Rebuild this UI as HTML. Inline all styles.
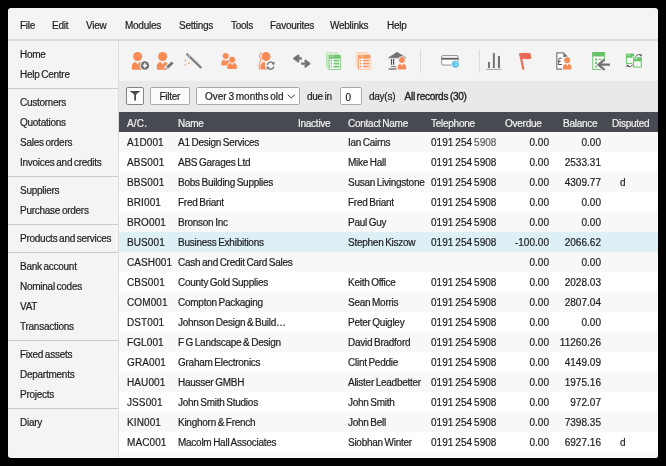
<!DOCTYPE html>
<html><head><meta charset="utf-8">
<style>
html,body{margin:0;padding:0;background:#000;width:666px;height:466px;overflow:hidden}
body{font-family:"Liberation Sans",sans-serif;font-size:10px;color:#1e1e1e;position:relative;-webkit-text-stroke:0.2px}
.win{position:absolute;left:8px;top:8px;width:650px;height:450px;background:#f4f4f4;border-radius:3px;overflow:hidden}
.a{position:absolute;white-space:nowrap;line-height:20px;letter-spacing:-0.26px;word-spacing:-0.8px}
.menu{position:absolute;left:0;top:0;width:650px;height:31px;border-bottom:2px solid #dcdcdc}
.side{position:absolute;left:0;top:33px;width:110px;height:417px;border-right:1px solid #dedede}
.sep{position:absolute;left:0;width:110px;height:1px;background:#cbcbcb}
.tb{position:absolute;left:111px;top:33px;width:539px;height:40px;background:#f4f4f4}
.fb{position:absolute;left:111px;top:73px;width:539px;height:31px;background:#e9e9e9}
.hd{position:absolute;left:111px;top:104px;width:539px;height:20px;background:#474a50;color:#f2f2f2}
.rows{position:absolute;left:111px;top:124px;width:539px;height:326px}
.r{position:absolute;left:0;width:539px;height:20px;background:#fff}
.r.o{background:#f8f8f8}
.r.s{background:#dcf0f6}
.btn{position:absolute;background:#fcfcfc;border:1px solid #a9a9a9;border-radius:2px;box-sizing:border-box}
.num{letter-spacing:0.02px}
.rt{text-align:right}
.menu .a{margin-top:2px}
.side .a{margin-top:1px}
.rows .a{margin-top:1px}
.hd .a{margin-top:1.5px}
.fb .a{margin-top:1px}
</style></head><body>
<div class="win" style="will-change:transform">
  <div class="menu">
    <span class="a" style="left:12px;top:6px">File</span>
    <span class="a" style="left:44px;top:6px">Edit</span>
    <span class="a" style="left:78px;top:6px">View</span>
    <span class="a" style="left:117px;top:6px">Modules</span>
    <span class="a" style="left:171px;top:6px">Settings</span>
    <span class="a" style="left:223px;top:6px">Tools</span>
    <span class="a" style="left:262px;top:6px">Favourites</span>
    <span class="a" style="left:322px;top:6px">Weblinks</span>
    <span class="a" style="left:379px;top:6px">Help</span>
  </div>
  <div class="side">
    <span class="a" style="left:12px;top:3px">Home</span>
    <span class="a" style="left:12px;top:23px">Help Centre</span>
    <div class="sep" style="top:47px"></div>
    <span class="a" style="left:12px;top:51px">Customers</span>
    <span class="a" style="left:12px;top:71px">Quotations</span>
    <span class="a" style="left:12px;top:91px">Sales orders</span>
    <span class="a" style="left:12px;top:111px">Invoices and credits</span>
    <div class="sep" style="top:135px"></div>
    <span class="a" style="left:12px;top:139px">Suppliers</span>
    <span class="a" style="left:12px;top:159px">Purchase orders</span>
    <div class="sep" style="top:183px"></div>
    <span class="a" style="left:12px;top:187px">Products and services</span>
    <div class="sep" style="top:211px"></div>
    <span class="a" style="left:12px;top:215px">Bank account</span>
    <span class="a" style="left:12px;top:235px">Nominal codes</span>
    <span class="a" style="left:12px;top:255px">VAT</span>
    <span class="a" style="left:12px;top:275px">Transactions</span>
    <div class="sep" style="top:299px"></div>
    <span class="a" style="left:12px;top:303px">Fixed assets</span>
    <span class="a" style="left:12px;top:323px">Departments</span>
    <span class="a" style="left:12px;top:343px">Projects</span>
    <div class="sep" style="top:367px"></div>
    <span class="a" style="left:12px;top:371px">Diary</span>
  </div>
  <div class="tb"></div>
  <div class="fb">
    <div class="btn" style="left:7px;top:6px;width:18px;height:18px;border-color:#858585;border-width:1.3px"></div>
    <div class="btn" style="left:31px;top:6px;width:40px;height:18px"></div>
    <span class="a" style="left:40.5px;top:5px">Filter</span>
    <div class="btn" style="left:77px;top:6px;width:104px;height:18px"></div>
    <span class="a" style="left:86px;top:5px;letter-spacing:-0.05px">Over 3 months old</span>
    <span class="a" style="left:188px;top:5px">due in</span>
    <div class="btn" style="left:221px;top:6px;width:22px;height:18px;background:#fff"></div>
    <span class="a" style="left:226.5px;top:6px">0</span>
    <span class="a" style="left:250px;top:5px">day(s)</span>
    <span class="a" style="left:285.5px;top:5px;-webkit-text-stroke:0.35px #222;letter-spacing:-0.25px">All records (30)</span>
  </div>
  <div class="hd">
    <span class="a" style="left:8px;top:0;letter-spacing:0.2px">A/C.</span>
    <span class="a" style="left:59px;top:0">Name</span>
    <span class="a" style="left:179px;top:0">Inactive</span>
    <span class="a" style="left:229px;top:0">Contact Name</span>
    <span class="a" style="left:312px;top:0">Telephone</span>
    <span class="a" style="left:386px;top:0">Overdue</span>
    <span class="a" style="left:444px;top:0">Balance</span>
    <span class="a" style="left:493px;top:0">Disputed</span>
  </div>
  <div class="rows" id="rows"><div class="r o" style="top:0px"><span class="a" style="left:8px;top:0;letter-spacing:0.1px">A1D001</span><span class="a" style="left:59px;top:0">A1 Design Services</span><span class="a" style="left:229px;top:0">Ian Cairns</span><span class="a num" style="left:312px;top:0">0191 254 <span style="color:#5c5c5c">5908</span></span><span class="a num rt" style="right:109px;top:0">0.00</span><span class="a num rt" style="right:57px;top:0">0.00</span></div><div class="r" style="top:20px"><span class="a" style="left:8px;top:0;letter-spacing:0.1px">ABS001</span><span class="a" style="left:59px;top:0">ABS Garages Ltd</span><span class="a" style="left:229px;top:0">Mike Hall</span><span class="a num" style="left:312px;top:0">0191 254 5908</span><span class="a num rt" style="right:109px;top:0">0.00</span><span class="a num rt" style="right:57px;top:0">2533.31</span></div><div class="r o" style="top:40px"><span class="a" style="left:8px;top:0;letter-spacing:0.1px">BBS001</span><span class="a" style="left:59px;top:0">Bobs Building Supplies</span><span class="a" style="left:229px;top:0">Susan Livingstone</span><span class="a num" style="left:312px;top:0">0191 254 5908</span><span class="a num rt" style="right:109px;top:0">0.00</span><span class="a num rt" style="right:57px;top:0">4309.77</span><span class="a" style="left:501px;top:0">d</span></div><div class="r" style="top:60px"><span class="a" style="left:8px;top:0;letter-spacing:0.1px">BRI001</span><span class="a" style="left:59px;top:0">Fred Briant</span><span class="a" style="left:229px;top:0">Fred Briant</span><span class="a num" style="left:312px;top:0">0191 254 5908</span><span class="a num rt" style="right:109px;top:0">0.00</span><span class="a num rt" style="right:57px;top:0">0.00</span></div><div class="r o" style="top:80px"><span class="a" style="left:8px;top:0;letter-spacing:0.1px">BRO001</span><span class="a" style="left:59px;top:0">Bronson Inc</span><span class="a" style="left:229px;top:0">Paul Guy</span><span class="a num" style="left:312px;top:0">0191 254 5908</span><span class="a num rt" style="right:109px;top:0">0.00</span><span class="a num rt" style="right:57px;top:0">0.00</span></div><div class="r s" style="top:100px"><span class="a" style="left:8px;top:0;letter-spacing:0.1px">BUS001</span><span class="a" style="left:59px;top:0">Business Exhibitions</span><span class="a" style="left:229px;top:0">Stephen Kiszow</span><span class="a num" style="left:312px;top:0">0191 254 5908</span><span class="a num rt" style="right:109px;top:0">-100.00</span><span class="a num rt" style="right:57px;top:0">2066.62</span></div><div class="r o" style="top:120px"><span class="a" style="left:8px;top:0;letter-spacing:0.1px">CASH001</span><span class="a" style="left:59px;top:0">Cash and Credit Card Sales</span><span class="a num rt" style="right:109px;top:0">0.00</span><span class="a num rt" style="right:57px;top:0">0.00</span></div><div class="r" style="top:140px"><span class="a" style="left:8px;top:0;letter-spacing:0.1px">CBS001</span><span class="a" style="left:59px;top:0">County Gold Supplies</span><span class="a" style="left:229px;top:0">Keith Office</span><span class="a num" style="left:312px;top:0">0191 254 5908</span><span class="a num rt" style="right:109px;top:0">0.00</span><span class="a num rt" style="right:57px;top:0">2028.03</span></div><div class="r o" style="top:160px"><span class="a" style="left:8px;top:0;letter-spacing:0.1px">COM001</span><span class="a" style="left:59px;top:0">Compton Packaging</span><span class="a" style="left:229px;top:0">Sean Morris</span><span class="a num" style="left:312px;top:0">0191 254 5908</span><span class="a num rt" style="right:109px;top:0">0.00</span><span class="a num rt" style="right:57px;top:0">2807.04</span></div><div class="r" style="top:180px"><span class="a" style="left:8px;top:0;letter-spacing:0.1px">DST001</span><span class="a" style="left:59px;top:0">Johnson Design &amp; Build…</span><span class="a" style="left:229px;top:0">Peter Quigley</span><span class="a num" style="left:312px;top:0">0191 254 5908</span><span class="a num rt" style="right:109px;top:0">0.00</span><span class="a num rt" style="right:57px;top:0">0.00</span></div><div class="r o" style="top:200px"><span class="a" style="left:8px;top:0;letter-spacing:0.1px">FGL001</span><span class="a" style="left:59px;top:0">F G Landscape &amp; Design</span><span class="a" style="left:229px;top:0">David Bradford</span><span class="a num" style="left:312px;top:0">0191 254 5908</span><span class="a num rt" style="right:109px;top:0">0.00</span><span class="a num rt" style="right:57px;top:0">11260.26</span></div><div class="r" style="top:220px"><span class="a" style="left:8px;top:0;letter-spacing:0.1px">GRA001</span><span class="a" style="left:59px;top:0">Graham Electronics</span><span class="a" style="left:229px;top:0">Clint Peddie</span><span class="a num" style="left:312px;top:0">0191 254 5908</span><span class="a num rt" style="right:109px;top:0">0.00</span><span class="a num rt" style="right:57px;top:0">4149.09</span></div><div class="r o" style="top:240px"><span class="a" style="left:8px;top:0;letter-spacing:0.1px">HAU001</span><span class="a" style="left:59px;top:0">Hausser GMBH</span><span class="a" style="left:229px;top:0">Alister Leadbetter</span><span class="a num" style="left:312px;top:0">0191 254 5908</span><span class="a num rt" style="right:109px;top:0">0.00</span><span class="a num rt" style="right:57px;top:0">1975.16</span></div><div class="r" style="top:260px"><span class="a" style="left:8px;top:0;letter-spacing:0.1px">JSS001</span><span class="a" style="left:59px;top:0">John Smith Studios</span><span class="a" style="left:229px;top:0">John Smith</span><span class="a num" style="left:312px;top:0">0191 254 5908</span><span class="a num rt" style="right:109px;top:0">0.00</span><span class="a num rt" style="right:57px;top:0">972.07</span></div><div class="r o" style="top:280px"><span class="a" style="left:8px;top:0;letter-spacing:0.1px">KIN001</span><span class="a" style="left:59px;top:0">Kinghorn &amp; French</span><span class="a" style="left:229px;top:0">John Bell</span><span class="a num" style="left:312px;top:0">0191 254 5908</span><span class="a num rt" style="right:109px;top:0">0.00</span><span class="a num rt" style="right:57px;top:0">7398.35</span></div><div class="r" style="top:300px"><span class="a" style="left:8px;top:0;letter-spacing:0.1px">MAC001</span><span class="a" style="left:59px;top:0">Macolm Hall Associates</span><span class="a" style="left:229px;top:0">Siobhan Winter</span><span class="a num" style="left:312px;top:0">0191 254 5908</span><span class="a num rt" style="right:109px;top:0">0.00</span><span class="a num rt" style="right:57px;top:0">6927.16</span><span class="a" style="left:501px;top:0">d</span></div><div class="r o" style="top:320px"></div></div>
</div>
<svg id="icons" width="666" height="466" style="position:absolute;left:0;top:0"><circle cx="137.6" cy="56.5" r="4.5" fill="#f78b55"/><path d="M131.80,68.80 L131.80,66.84 C131.80,63.93 133.47,62.00 135.98,62.00 L136.09,62.30 L137.60,64.81 L139.11,62.30 L139.22,62.00 C141.73,62.00 143.40,63.93 143.40,66.84 L143.40,68.80 Q143.40,69.80 142.40,69.80 L132.80,69.80 Q131.80,69.80 131.80,68.80 Z" fill="#f78b55"/><circle cx="144.9" cy="65.5" r="5.2" fill="#f4f4f4"/><circle cx="144.9" cy="65.5" r="4.3" fill="#727272"/><path d="M144.9,63.3 V67.7 M142.7,65.5 H147.1" stroke="#fff" stroke-width="1.5"/><circle cx="162.6" cy="56.5" r="4.5" fill="#f78b55"/><path d="M156.80,68.80 L156.80,66.84 C156.80,63.93 158.47,62.00 160.98,62.00 L161.09,62.30 L162.60,64.81 L164.11,62.30 L164.22,62.00 C166.73,62.00 168.40,63.93 168.40,66.84 L168.40,68.80 Q168.40,69.80 167.40,69.80 L157.80,69.80 Q156.80,69.80 156.80,68.80 Z" fill="#f78b55"/><path d="M165.6,69.2 L172.6,62.6" stroke="#f4f4f4" stroke-width="5"/><path d="M167.3,67.6 L172.6,62.6" stroke="#727272" stroke-width="2.8"/><path d="M165.2,69.6 L166.0,67.4 L167.6,68.9 Z" fill="#727272"/><path d="M187.2,54.3 L200.7,67.4" stroke="#808080" stroke-width="2.3" stroke-linecap="round"/><path d="M187.6,54.7 L190.0,57.0" stroke="#d0d0d0" stroke-width="0.9"/><circle cx="185.4" cy="60.4" r="0.9" fill="#f2ac70"/><circle cx="189" cy="63.2" r="0.9" fill="#f2ac70"/><circle cx="185.4" cy="64.6" r="0.9" fill="#f2ac70"/><circle cx="225.7" cy="55.9" r="3.0" fill="#f78b55"/><path d="M221.30,64.60 L221.30,63.36 C221.30,61.16 222.57,59.70 224.47,59.70 L224.56,60.00 L225.70,61.82 L226.84,60.00 L226.93,59.70 C228.83,59.70 230.10,61.16 230.10,63.36 L230.10,64.60 Q230.10,65.60 229.10,65.60 L222.30,65.60 Q221.30,65.60 221.30,64.60 Z" fill="#f78b55"/><circle cx="232.1" cy="59.7" r="3.8" fill="#f4f4f4"/><path d="M226.50,68.90 L226.50,66.97 C226.50,64.11 228.11,62.20 230.53,62.20 L232.10,62.50 L232.10,62.20 L232.10,62.50 L233.67,62.20 C236.09,62.20 237.70,64.11 237.70,66.97 L237.70,68.90 Q237.70,69.90 236.70,69.90 L227.50,69.90 Q226.50,69.90 226.50,68.90 Z" fill="#f4f4f4"/><circle cx="232.1" cy="59.7" r="3.0" fill="#f78b55"/><path d="M227.30,68.10 L227.30,66.78 C227.30,64.51 228.68,63.00 230.76,63.00 L230.85,63.30 L232.10,65.20 L233.35,63.30 L233.44,63.00 C235.52,63.00 236.90,64.51 236.90,66.78 L236.90,68.10 Q236.90,69.10 235.90,69.10 L228.30,69.10 Q227.30,69.10 227.30,68.10 Z" fill="#f78b55"/><path d="M261.4,52.2 Q258.0,55.8 261.0,59.5 Q257.9,63.5 259.4,69.5" stroke="#f78b55" stroke-width="1" fill="none"/><circle cx="266.0" cy="56.6" r="4.5" fill="#f78b55"/><path d="M260.40,68.60 L260.40,66.71 C260.40,63.88 262.01,62.00 264.43,62.00 L264.54,62.30 L266.00,64.74 L267.46,62.30 L267.57,62.00 C269.99,62.00 271.60,63.88 271.60,66.71 L271.60,68.60 Q271.60,69.60 270.60,69.60 L261.40,69.60 Q260.40,69.60 260.40,68.60 Z" fill="#f78b55"/><circle cx="270.6" cy="65.6" r="5.6" fill="#f4f4f4"/><path d="M267.4,65.0 A3.3,3.3 0 0 1 273.4,63.4" stroke="#727272" stroke-width="1.3" fill="none"/><path d="M274.6,61.6 L274.3,64.9 L271.5,63.9 Z" fill="#727272"/><path d="M273.8,66.2 A3.3,3.3 0 0 1 267.8,67.8" stroke="#727272" stroke-width="1.3" fill="none"/><path d="M266.6,69.6 L266.9,66.3 L269.7,67.3 Z" fill="#727272"/><path d="M299.2,55.2 L294.4,58.5 L299.2,61.9 M294.6,58.5 H301.8" stroke="#727272" stroke-width="2.3" fill="none" stroke-linejoin="round"/><path d="M304.6,60.3 L309.3,63.6 L304.6,67.0 M301.1,63.6 H309.0" stroke="#727272" stroke-width="2.3" fill="none" stroke-linejoin="round"/><rect x="325.9" y="52.1" width="12.7" height="15.6" fill="#a3daa3" stroke="#fff" stroke-width="0.5"/><rect x="327.09999999999997" y="53.4" width="12.7" height="16.0" fill="#a3daa3" stroke="#fff" stroke-width="0.5"/><rect x="328.2" y="54.7" width="12.8" height="15.4" fill="#6ec66e" stroke="#fff" stroke-width="0.5"/><rect x="329.09999999999997" y="55.5" width="5.760000000000001" height="1.2" fill="#a3daa3"/><rect x="329.59999999999997" y="58.7" width="10.4" height="10.4" fill="#fff"/><rect x="330.59999999999997" y="59.7" width="1.5" height="1.8" fill="#6ec66e"/><rect x="333.59999999999997" y="59.7" width="5.6000000000000005" height="1.8" fill="#6ec66e"/><rect x="330.59999999999997" y="62.7" width="1.5" height="1.8" fill="#6ec66e"/><rect x="333.59999999999997" y="62.7" width="5.6000000000000005" height="1.8" fill="#6ec66e"/><rect x="330.59999999999997" y="65.7" width="1.5" height="1.8" fill="#6ec66e"/><rect x="333.59999999999997" y="65.7" width="5.6000000000000005" height="1.8" fill="#6ec66e"/><rect x="355.2" y="52.0" width="13.2" height="15.4" fill="#fbc1a1" stroke="#fff" stroke-width="0.5"/><rect x="356.4" y="53.3" width="13.2" height="15.8" fill="#fbc1a1" stroke="#fff" stroke-width="0.5"/><rect x="357.5" y="54.6" width="13.3" height="15.200000000000001" fill="#f7955f" stroke="#fff" stroke-width="0.5"/><rect x="358.4" y="55.4" width="5.985" height="1.2" fill="#fbc1a1"/><rect x="358.9" y="58.6" width="10.9" height="10.200000000000001" fill="#fff"/><rect x="359.9" y="59.6" width="1.5" height="1.8" fill="#f7955f"/><rect x="362.9" y="59.6" width="6.1000000000000005" height="1.8" fill="#f7955f"/><rect x="359.9" y="62.6" width="1.5" height="1.8" fill="#f7955f"/><rect x="362.9" y="62.6" width="6.1000000000000005" height="1.8" fill="#f7955f"/><rect x="359.9" y="65.6" width="1.5" height="1.8" fill="#f7955f"/><rect x="362.9" y="65.6" width="6.1000000000000005" height="1.8" fill="#f7955f"/><path d="M388.6,57.8 L397.1,52.3 L405.9,57.8 Z" fill="#727272" stroke="#727272" stroke-width="0.8" stroke-linejoin="round"/><rect x="390.9" y="59" width="1.2" height="5.8" fill="#555"/><rect x="393" y="59" width="1.2" height="5.8" fill="#555"/><rect x="390.9" y="66" width="5.2" height="1.2" fill="#888"/><rect x="388.6" y="68.3" width="8" height="1.4" fill="#727272"/><circle cx="401.9" cy="60.0" r="3.7" fill="#f4f4f4"/><path d="M396.80,69.40 L396.80,67.66 C396.80,64.99 398.27,63.20 400.47,63.20 L401.90,63.50 L401.90,63.20 L401.90,63.50 L403.33,63.20 C405.53,63.20 407.00,64.99 407.00,67.66 L407.00,69.40 Q407.00,70.40 406.00,70.40 L397.80,70.40 Q396.80,70.40 396.80,69.40 Z" fill="#f4f4f4"/><circle cx="401.9" cy="60.0" r="2.9" fill="#f78b55"/><path d="M397.60,68.60 L397.60,67.47 C397.60,65.39 398.84,64.00 400.70,64.00 L400.78,64.30 L401.90,66.02 L403.02,64.30 L403.10,64.00 C404.96,64.00 406.20,65.39 406.20,67.47 L406.20,68.60 Q406.20,69.60 405.20,69.60 L398.60,69.60 Q397.60,69.60 397.60,68.60 Z" fill="#f78b55"/><rect x="420" y="50" width="1" height="22.6" fill="#dadada"/><rect x="479" y="50" width="1" height="22.6" fill="#dadada"/><rect x="441.7" y="55.6" width="16.4" height="9.4" rx="1" fill="#fff" stroke="#858585" stroke-width="0.9"/><rect x="441.5" y="57.8" width="16.8" height="1.8" fill="#606060"/><circle cx="455.4" cy="64.2" r="4.3" fill="#f4f4f4"/><circle cx="455.4" cy="64.2" r="3.5" fill="#5cc0e8"/><path d="M453.5,62.6 h0.9 M453.5,65.6 h0.9 M455.3,62.6 h2 M455.3,64.1 h2 M455.3,65.6 h2" stroke="#cdeefa" stroke-width="0.7"/><rect x="488" y="62" width="1.9" height="6" fill="#727272"/><rect x="492.9" y="53.1" width="1.9" height="14.9" fill="#727272"/><rect x="497.9" y="55.9" width="2.1" height="12.1" fill="#727272"/><rect x="486.1" y="68.9" width="15.3" height="0.9" fill="#9a9a9a"/><path d="M519,53.2 Q524.5,52.2 530.6,53.2 L531.2,58.6 Q528.5,59.6 525,59 Q522.5,58.6 520.9,59.1 Z" fill="#ec6a52"/><path d="M520.2,54 L523.4,69.6" stroke="#ec6a52" stroke-width="2.1"/><circle cx="522.5" cy="56.3" r="0.45" fill="#7a6a8a"/><circle cx="524.6" cy="55.5" r="0.45" fill="#7a6a8a"/><circle cx="527.6" cy="56.2" r="0.45" fill="#7a6a8a"/><circle cx="529.5" cy="57.9" r="0.45" fill="#7a6a8a"/><path d="M556.8,52.8 H563.4 L567.2,56.6 V69.2 H556.8 Z" fill="#fff" stroke="#7a7a7a" stroke-width="1.2" stroke-linejoin="round"/><path d="M563.2,52.6 L567.5,56.9 H563.2 Z" fill="#7a7a7a"/><path d="M561.6,59.0 Q561.2,57.9 560.0,57.9 Q558.8,57.9 558.8,59.4 V63.0 Q558.8,64.0 557.9,64.5 H561.9 M557.9,61.3 H560.7" stroke="#555" stroke-width="1" fill="none"/><circle cx="567.2" cy="60.3" r="3.8" fill="#f4f4f4"/><path d="M562.10,69.30 L562.10,67.60 C562.10,64.96 563.57,63.20 565.77,63.20 L567.20,63.50 L567.20,63.20 L567.20,63.50 L568.63,63.20 C570.83,63.20 572.30,64.96 572.30,67.60 L572.30,69.30 Q572.30,70.30 571.30,70.30 L563.10,70.30 Q562.10,70.30 562.10,69.30 Z" fill="#f4f4f4"/><circle cx="567.2" cy="60.3" r="3.0" fill="#f78b55"/><path d="M562.90,68.50 L562.90,67.41 C562.90,65.36 564.14,64.00 566.00,64.00 L566.08,64.30 L567.20,65.98 L568.32,64.30 L568.40,64.00 C570.26,64.00 571.50,65.36 571.50,67.41 L571.50,68.50 Q571.50,69.50 570.50,69.50 L563.90,69.50 Q562.90,69.50 562.90,68.50 Z" fill="#f78b55"/><rect x="592.8" y="52.6" width="11.5" height="16.8" fill="#fff" stroke="#66c266" stroke-width="1"/><rect x="592.4" y="52.1" width="12.3" height="4.4" fill="#66c266"/><rect x="595" y="58.5" width="2" height="2.1" fill="#66c266"/><rect x="595" y="61.9" width="2" height="2.1" fill="#66c266"/><rect x="595" y="65.5" width="2" height="2.1" fill="#66c266"/><rect x="598.5" y="58.9" width="4.5" height="1.2" fill="#66c266"/><path d="M604.6,61.3 L598.5,66.6 L604.6,71.9 M599,66.6 H611" stroke="#f4f4f4" stroke-width="4.2" fill="none" transform="translate(0,-1.9)"/><path d="M604.6,61.3 L598.5,66.6 L604.6,71.9 M599,66.6 H610" stroke="#727272" stroke-width="2.3" fill="none" transform="translate(0,-1.9)"/><rect x="625.9" y="53.6" width="8.2" height="10.3" fill="#66c266"/><rect x="626.8" y="57.6" width="6.3999999999999995" height="5.4" fill="#d5eed5"/><rect x="627.40" y="58.20" width="2.30" height="1.75" fill="#fff"/><rect x="630.30" y="58.20" width="2.30" height="1.75" fill="#fff"/><rect x="627.40" y="60.55" width="2.30" height="1.75" fill="#fff"/><rect x="630.30" y="60.55" width="2.30" height="1.75" fill="#fff"/><rect x="626.9" y="54.6" width="3.28" height="0.9" fill="#c8ecc8"/><rect x="632.3" y="56.45" width="10.3" height="11.95" fill="#f4f4f4"/><rect x="633.1" y="57.25" width="8.7" height="10.35" fill="#66c266"/><rect x="634.0" y="61.25" width="6.8999999999999995" height="5.449999999999999" fill="#d5eed5"/><rect x="634.60" y="61.85" width="2.55" height="1.77" fill="#fff"/><rect x="637.75" y="61.85" width="2.55" height="1.77" fill="#fff"/><rect x="634.60" y="64.22" width="2.55" height="1.77" fill="#fff"/><rect x="637.75" y="64.22" width="2.55" height="1.77" fill="#fff"/><rect x="634.1" y="58.25" width="3.48" height="0.9" fill="#c8ecc8"/><path d="M635.6,56.4 Q638.2,53.0 641.0,55.2" stroke="#555" stroke-width="1" fill="none"/><path d="M641.9,53.8 L641.6,56.6 L639.3,55.9 Z" fill="#555"/><path d="M632.8,64.9 Q630.2,68.2 627.4,66.0" stroke="#555" stroke-width="1" fill="none"/><path d="M626.5,67.4 L626.8,64.6 L629.1,65.3 Z" fill="#555"/><path d="M130.2,91.0 H139.8 V91.8 Q136.6,93.0 136.0,95.0 V100.6 H134.2 V95.0 Q133.6,93.0 130.2,91.8 Z" fill="#4a4a4a"/><path d="M287.7,94.7 L291.2,98.0 L294.7,94.7" stroke="#3a3a3a" stroke-width="1" fill="none"/></svg>
</body></html>
